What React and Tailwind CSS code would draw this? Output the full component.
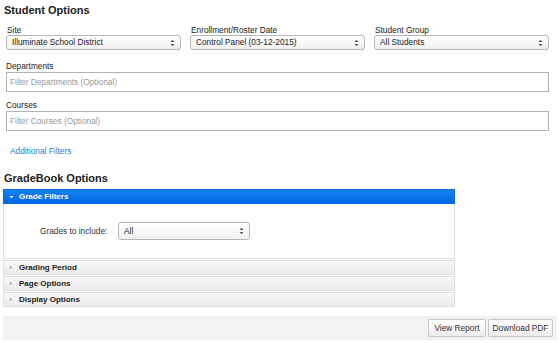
import React from 'react';

const font = { fontFamily: '"Liberation Sans", Arial, sans-serif' };

function Caret() {
  return (
    <svg width="5" height="8" viewBox="0 0 5 8" className="shrink-0">
      <path d="M0.5 3 L2.5 0.8 L4.5 3 Z M0.5 5 L2.5 7.2 L4.5 5 Z" fill="#555" />
    </svg>
  );
}

function Select({ value, className = '' }) {
  return (
    <div className={`flex items-center justify-between h-[15px] rounded-[3px] border border-[#b5b5b5] bg-gradient-to-b from-white to-[#f1f1f1] pl-[5px] pr-[5px] text-[8.3px] text-[#222] ${className}`}>
      <span>{value}</span>
      <Caret />
    </div>
  );
}

function Field({ label, value }) {
  return (
    <div className="flex flex-col">
      <label className="h-[10px] leading-[10px] text-[8.3px] text-[#222] pl-[1px]">{label}</label>
      <Select value={value} />
    </div>
  );
}

function TextBox({ label, placeholder }) {
  return (
    <div className="flex flex-col">
      <label className="h-[10px] leading-[10px] text-[8.3px] text-[#222] mb-[1px]">{label}</label>
      <div className="h-[20px] border border-[#b3b3b3] flex items-center px-[3px] text-[8.3px] text-[#999]">
        {placeholder}
      </div>
    </div>
  );
}

function Section({ title, open }) {
  return (
    <div className={`h-[15px] flex items-center pl-[5px] text-[8px] font-bold border ${open ? 'bg-gradient-to-b from-[#1782f2] to-[#0066e6] border-[#0a6ae6] text-white' : 'bg-gradient-to-b from-[#f8f8f8] to-[#ececec] border-[#dedede] text-[#222]'}`}>
      {open ? (
        <svg width="5" height="4" viewBox="0 0 5 4" className="mr-[5px]"><path d="M0.5 1 L4.5 1 L2.5 3.2 Z" fill="#fff" /></svg>
      ) : (
        <svg width="4" height="5" viewBox="0 0 4 5" className="mr-[6px]"><path d="M1 0.5 L3.2 2.5 L1 4.5 Z" fill="#aaa" /></svg>
      )}
      {title}
    </div>
  );
}

export default function App() {
  return (
    <div style={font} className="w-[560px] h-[343px] bg-white overflow-hidden">
      <h2 className="pt-[3px] pl-[4px] h-[25px] text-[11px] font-bold text-[#222] leading-[14px]">Student Options</h2>

      <div className="px-[6px] grid grid-cols-3 gap-x-[9px] w-[555px]">
        <Field label="Site" value="Illuminate School District" />
        <Field label="Enrollment/Roster Date" value="Control Panel (03-12-2015)" />
        <Field label="Student Group" value="All Students" />
      </div>

      <div className="px-[6px] w-[555px] mt-[11px]">
        <TextBox label="Departments" placeholder="Filter Departments (Optional)" />
      </div>
      <div className="px-[6px] w-[555px] mt-[8px]">
        <TextBox label="Courses" placeholder="Filter Courses (Optional)" />
      </div>

      <div className="pl-[10px] mt-[15px] h-[10px] leading-[10px] text-[8.3px] text-[#1487d8]">Additional Filters</div>

      <h2 className="pl-[4px] mt-[15px] h-[14px] leading-[14px] text-[11px] font-bold text-[#222]">GradeBook Options</h2>

      <div className="ml-[3px] w-[452px] mt-[4px] flex flex-col gap-[1px]">
        <div>
          <Section title="Grade Filters" open />
          <div className="h-[55px] border-x border-b border-[#dedede] flex items-center pl-[36px]">
            <span className="text-[8.3px] text-[#333] w-[78px]">Grades to include:</span>
            <Select value="All" className="w-[132px] h-[18px]" />
          </div>
        </div>
        <Section title="Grading Period" />
        <Section title="Page Options" />
        <Section title="Display Options" />
      </div>

      <div className="ml-[3px] w-[554px] mt-[9px] h-[24px] bg-[#f2f2f2] flex items-center justify-end pr-[4px] gap-[2px]">
        <button className="h-[18px] w-[58px] rounded-[2px] border border-[#c8c8c8] bg-gradient-to-b from-white to-[#ececec] text-[8.3px] text-[#333]">View Report</button>
        <button className="h-[18px] w-[65px] rounded-[2px] border border-[#c8c8c8] bg-gradient-to-b from-white to-[#ececec] text-[8.3px] text-[#333]">Download PDF</button>
      </div>
    </div>
  );
}
